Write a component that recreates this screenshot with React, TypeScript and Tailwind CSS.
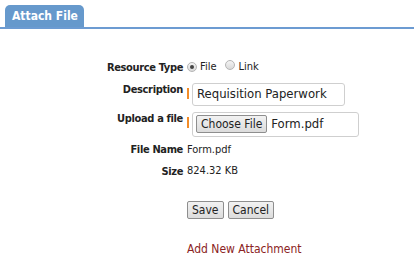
import React from 'react';

function Radio({ checked }: { checked?: boolean }) {
  return (
    <span className="inline-flex h-[10px] w-[10px] items-center justify-center rounded-full border border-[#b5b5b5] bg-gradient-to-b from-[#f4f4f4] to-[#d9d9d9]">
      {checked && <span className="h-[4px] w-[4px] rounded-full bg-[#444]" />}
    </span>
  );
}

function Required() {
  return <span className="mt-[5px] h-[11px] w-[2px] bg-[#f28c28]" />;
}

const label = 'w-[183px] shrink-0 text-right font-bold text-[11px] leading-[13px] tracking-[-0.35px] text-[#222]';

export default function App() {
  return (
    <div className="h-[268px] w-[414px] overflow-hidden bg-white font-['DejaVu_Sans_Condensed','DejaVu_Sans',sans-serif] text-[#222]">
      <div className="flex border-b-2 border-[#6c9bd2] pl-[5px] pt-[5px]">
        <div className="flex h-[22px] w-[79px] items-center rounded-t-[5px] bg-[#6699cc] pl-[7px] text-[12px] font-bold text-white">
          Attach File
        </div>
      </div>

      <div className="mt-[30px] flex items-center">
        <div className={label}>Resource Type</div>
        <div className="ml-[4px] flex items-center text-[11px]">
          <Radio checked />
          <span className="ml-[3px]">File</span>
          <span className="ml-[9px]">
            <Radio />
          </span>
          <span className="ml-[3px]">Link</span>
        </div>
      </div>

      <div className="mt-[7px] flex items-start">
        <div className={label}>Description</div>
        <div className="ml-[4px] flex items-start">
          <Required />
          <div className="ml-[3px] flex h-[23px] w-[153px] items-center rounded-[3px] border border-[#cfcfcf] pl-[4px] text-[13px]">
            Requisition Paperwork
          </div>
        </div>
      </div>

      <div className="mt-[6px] flex items-start">
        <div className={label}>Upload a file</div>
        <div className="ml-[4px] flex items-start">
          <Required />
          <div className="ml-[3px] flex h-[25px] w-[167px] items-center rounded-[3px] border border-[#cfcfcf] pl-[3px] text-[13px]">
            <span className="flex h-[18px] items-center rounded-[2px] border border-[#8e8e8e] bg-gradient-to-b from-[#f2f2f2] to-[#dcdcdc] px-[4px] text-[12px]">
              Choose File
            </span>
            <span className="ml-[4px]">Form.pdf</span>
          </div>
        </div>
      </div>

      <div className="mt-[5px] flex items-center">
        <div className={label}>File Name</div>
        <div className="ml-[4px] text-[11px]">Form.pdf</div>
      </div>

      <div className="mt-[5px] flex items-center">
        <div className={label}>Size</div>
        <div className="ml-[4px] text-[11px]">824.32 KB</div>
      </div>

      <div className="mt-[21px] flex gap-[4px] pl-[187px]">
        <button className="h-[18px] rounded-[2px] border border-[#8e8e8e] bg-gradient-to-b from-[#f2f2f2] to-[#dcdcdc] px-[4px] text-[12px] leading-none">
          Save
        </button>
        <button className="h-[18px] rounded-[2px] border border-[#8e8e8e] bg-gradient-to-b from-[#f2f2f2] to-[#dcdcdc] px-[4px] text-[12px] leading-none">
          Cancel
        </button>
      </div>

      <div className="mt-[21px] pl-[187px] text-[12px] text-[#8b2323]">Add New Attachment</div>
    </div>
  );
}
